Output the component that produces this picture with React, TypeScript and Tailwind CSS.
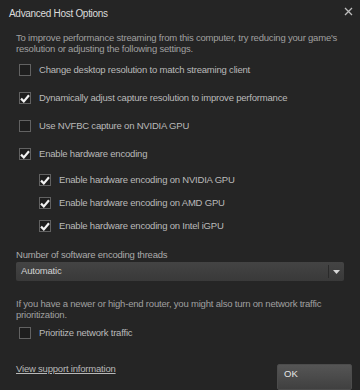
import { useState } from 'react';

type CheckProps = {
  label: string;
  checked: boolean;
  onToggle: () => void;
  className?: string;
};

function CheckRow({ label, checked, onToggle, className = '' }: CheckProps) {
  return (
    <button onClick={onToggle} className={`flex items-center gap-[8px] text-left ${className}`}>
      <span className="w-[12px] h-[12px] border border-[#626262] bg-[#1e1e1e] flex items-center justify-center shrink-0">
        {checked && (
          <svg width="10" height="9" viewBox="0 0 10 9">
            <path d="M1 4.6 L3.8 7.4 L9 1.3" fill="none" stroke="#f2f2f2" strokeWidth="2.2" />
          </svg>
        )}
      </span>
      <span className="text-[9.5px] tracking-[-0.2px] text-[#bababa] leading-none">{label}</span>
    </button>
  );
}

export default function App() {
  const [opts, setOpts] = useState({
    desktopRes: false,
    dynamicRes: true,
    nvfbc: false,
    hwEncoding: true,
    nvidia: true,
    amd: true,
    intel: true,
    prioritize: false,
  });

  const toggle = (key: keyof typeof opts) => setOpts({ ...opts, [key]: !opts[key] });

  return (
    <div className="w-[360px] h-[390px] bg-[#252525] overflow-hidden flex flex-col font-['Liberation_Sans',Arial,sans-serif]">
      {/* Title bar */}
      <div className="mt-[3px] flex items-center justify-between pl-[9px] pr-[7px] h-[25px]">
        <span className="text-[10px] tracking-[-0.3px] text-[#dcdcdc]">Advanced Host Options</span>
        <svg width="9" height="9" viewBox="0 0 9 9" className="-mt-[4px]">
          <path d="M1 1 L8 8 M8 1 L1 8" stroke="#bdbdbd" strokeWidth="1.3" />
        </svg>
      </div>

      <div className="flex flex-col px-[16px]">
        <p className="mt-[9px] text-[9.5px] tracking-[-0.2px] leading-[11px] text-[#a0a0a0]">
          To improve performance streaming from this computer, try reducing your game's resolution or adjusting the following settings.
        </p>

        <div className="flex flex-col gap-[16px] mt-[10px] pl-[3px]">
          <CheckRow label="Change desktop resolution to match streaming client" checked={opts.desktopRes} onToggle={() => toggle('desktopRes')} />
          <CheckRow label="Dynamically adjust capture resolution to improve performance" checked={opts.dynamicRes} onToggle={() => toggle('dynamicRes')} />
          <CheckRow label="Use NVFBC capture on NVIDIA GPU" checked={opts.nvfbc} onToggle={() => toggle('nvfbc')} />
          <CheckRow label="Enable hardware encoding" checked={opts.hwEncoding} onToggle={() => toggle('hwEncoding')} />
        </div>

        <div className="flex flex-col gap-[11px] mt-[14px] pl-[23px]">
          <CheckRow label="Enable hardware encoding on NVIDIA GPU" checked={opts.nvidia} onToggle={() => toggle('nvidia')} />
          <CheckRow label="Enable hardware encoding on AMD GPU" checked={opts.amd} onToggle={() => toggle('amd')} />
          <CheckRow label="Enable hardware encoding on Intel iGPU" checked={opts.intel} onToggle={() => toggle('intel')} />
        </div>

        <div className="mt-[17px] text-[9.5px] tracking-[-0.2px] leading-[12px] text-[#ababab]">Number of software encoding threads</div>
        <div className="mt-[1px] h-[19px] flex items-center bg-gradient-to-b from-[#444444] to-[#393939] rounded-[2px]">
          <span className="flex-1 pl-[5px] text-[9.5px] tracking-[-0.2px] text-[#d2d2d2]">Automatic</span>
          <span className="w-px h-[13px] bg-[#2a2a2a]" />
          <span className="w-[15px] flex justify-center">
            <svg width="7" height="4" viewBox="0 0 7 4">
              <path d="M0 0 H7 L3.5 4 Z" fill="#d8d8d8" />
            </svg>
          </span>
        </div>

        <p className="mt-[17px] text-[9.5px] tracking-[-0.2px] leading-[11px] text-[#a0a0a0]">
          If you have a newer or high-end router, you might also turn on network traffic prioritization.
        </p>

        <div className="mt-[7px] pl-[3px]">
          <CheckRow label="Prioritize network traffic" checked={opts.prioritize} onToggle={() => toggle('prioritize')} />
        </div>

        <div className="mt-[25px] flex items-start justify-between">
          <a className="-mt-[2px] text-[9.5px] tracking-[-0.2px] text-[#b8b8b8] underline cursor-pointer">View support information</a>
          <button className="w-[75px] h-[26px] mr-[-8px] border border-[#4c4c4c] bg-gradient-to-b from-[#555555] to-[#404040] rounded-[2px] text-left pl-[6px] pb-[6px] text-[9.5px] text-[#e6e6e6]">
            OK
          </button>
        </div>
      </div>
    </div>
  );
}
